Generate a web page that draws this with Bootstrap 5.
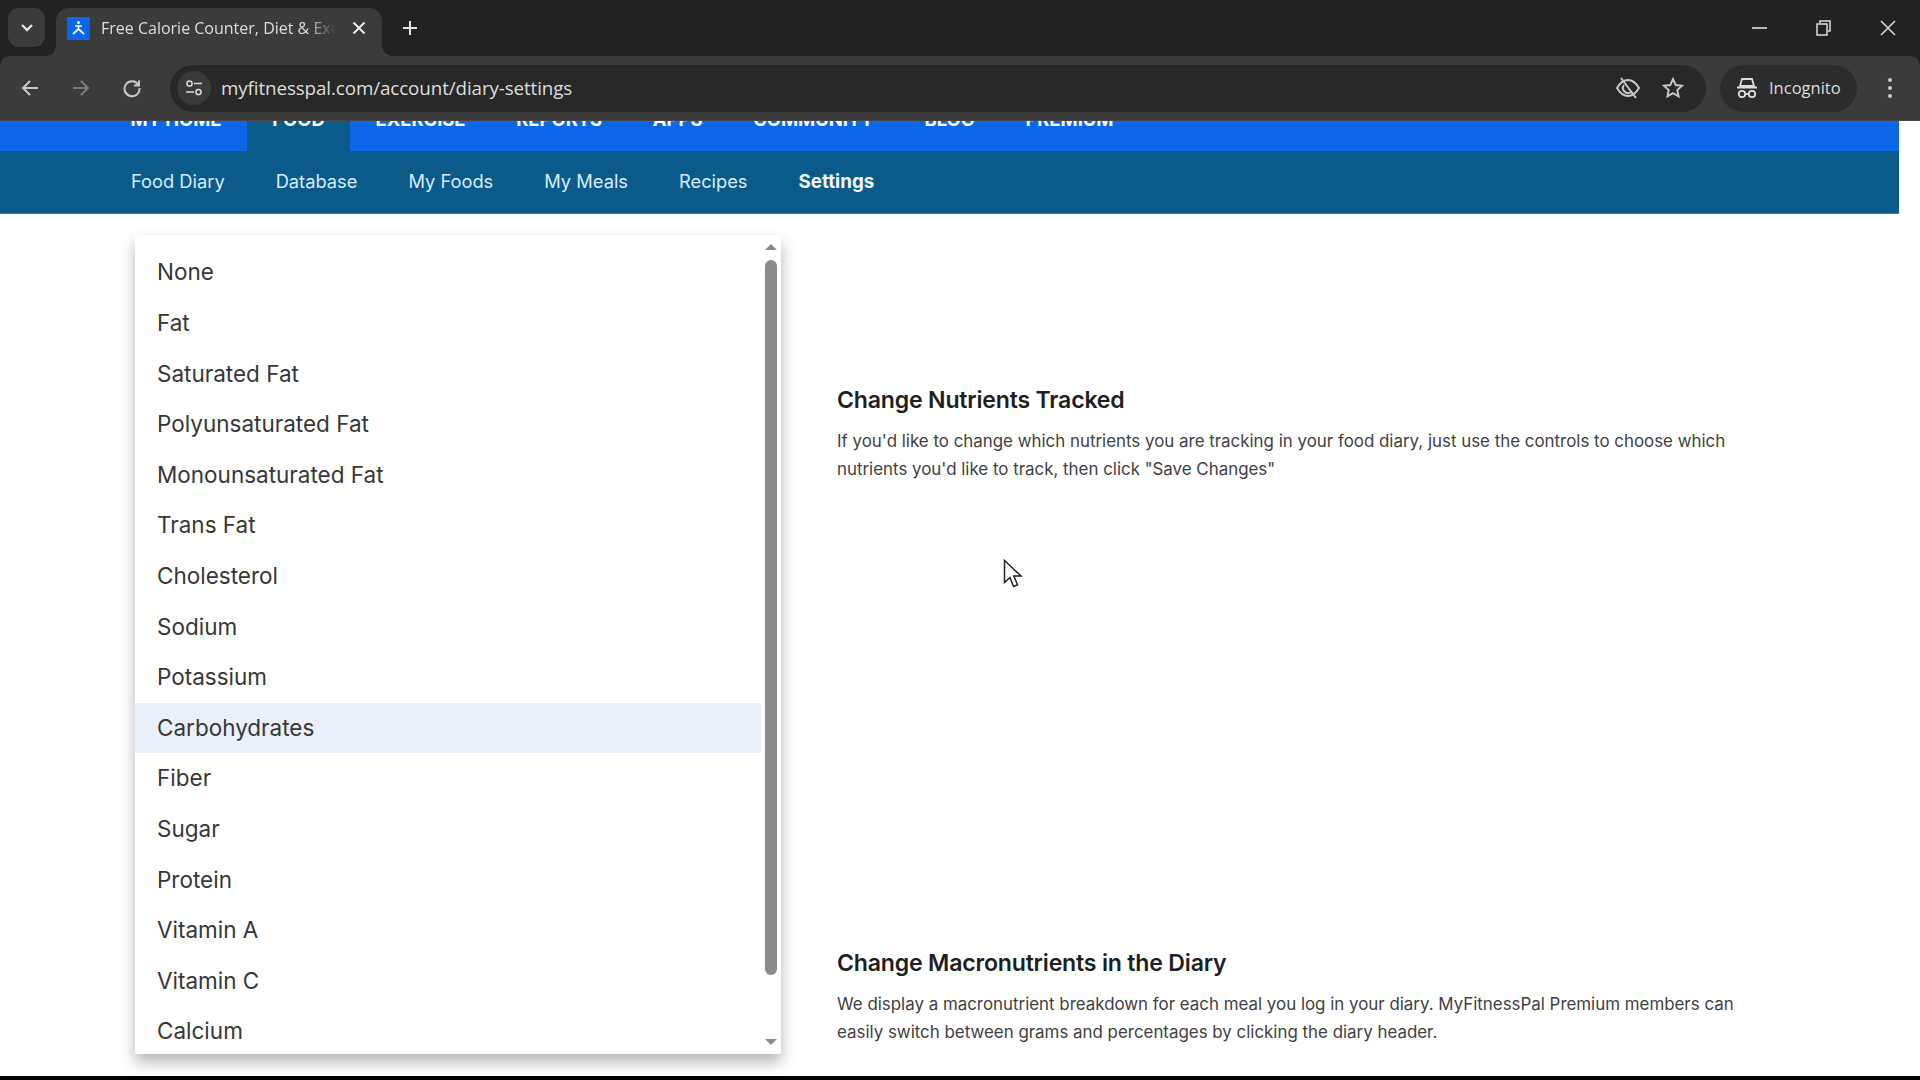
<!DOCTYPE html>
<html lang="en">
<head>
<meta charset="utf-8">
<title>Diary Settings</title>
<link href="https://cdn.jsdelivr.net/npm/bootstrap@5.3.0/dist/css/bootstrap.min.css" rel="stylesheet">
<style>
html,body{height:1080px;overflow:hidden;background:#fff}
.shell{height:1080px;font-family:Inter,"Noto Sans",sans-serif}
.chromebar{background:#222}
.tabstrip{height:56px;background:#222;color:#e3e3e3;font-family:"Open Sans","Noto Sans",sans-serif}
.tablist-btn{width:37px;height:39px;margin:8px 0 0 8px;background:#3b3b3b;border-radius:11px}
.tab-on{position:relative;width:326px;height:48px;margin:8px 0 0 11px;background:#3b3b3b;border-radius:13px 13px 0 0;padding:0 12px 8px 11px}
.tab-on::before,.tab-on::after{content:"";position:absolute;bottom:0;width:10px;height:10px}
.tab-on::before{left:-10px;background:radial-gradient(circle at 0 0,#222 9.5px,#3b3b3b 10px)}
.tab-on::after{right:-10px;background:radial-gradient(circle at 100% 0,#222 9.5px,#3b3b3b 10px)}
.fav{width:23px;height:23px;background:#0c66e8;flex:none}
.tab-title{width:234px;margin-left:11px;font-size:16px;white-space:nowrap;overflow:hidden;color:#ddd;-webkit-mask-image:linear-gradient(90deg,#000 88%,transparent);mask-image:linear-gradient(90deg,#000 88%,transparent)}
.tab-x{margin-left:17px}
.tab-plus{margin:20px 0 0 20px}
.winbtns{height:56px;margin-left:auto;padding-right:24px;gap:49px}
.toolbar{height:65px;background:#3b3b3b;position:relative;z-index:3;border-bottom:1px solid #4a4445;border-radius:10px 10px 0 0}
.navico{width:51px}
.omnibox{margin-left:13px;width:1536px;height:47px;background:#282828;border-radius:24px;color:#e3e3e3;padding:0 22px 0 7px}
.sitechip{width:34px;height:34px;border-radius:50%;background:#3a3a3a}
.url{margin-left:10px;font-size:18.8px;font-family:"Open Sans","Noto Sans",sans-serif;color:#dedede;letter-spacing:-.1px}
.omni-end{margin-left:auto;gap:21px}
.incog{margin-left:14px;width:137px;height:47px;background:#2c2c2c;border-radius:24px;padding-left:16px;color:#ddd;font-family:"Open Sans","Noto Sans",sans-serif;font-size:16.5px;gap:11px}
.kebab{margin-left:30px}
.pagehost{width:1899px}
.topnav{height:30px;background:#0c66e8;padding-left:105px}
.topnav a{display:block;height:32px;padding:0 25.4px;margin-top:-2px;line-height:0;color:#fff;font-weight:700;font-size:18.4px;text-decoration:none}
.topnav a.here{background:#0a5a8a}
.subnav{height:63px;background:#0a5a8a;padding-left:131px;gap:51px;border-bottom:1px solid #3b7aa3}
.subnav a{color:#d6ecfb;text-decoration:none;font-size:18.3px;font-weight:400}
.subnav a.here{color:#f2faff;font-weight:700;font-size:18.8px}
.pagemain{flex:1 1 auto;position:relative;background:#fff;min-height:0}
.copyblock{margin-left:837px;width:920px;padding-top:171px}
.copyblock h2{font-size:23.1px;font-weight:600;color:#1f1f1f;margin:0 0 12px;line-height:30px;letter-spacing:-.2px}
.copyblock p{font-size:16.9px;line-height:28px;color:#3f3f3f;margin:0}
.second{margin-top:465px}
.nutrient-menu{position:absolute;left:135px;top:21px;width:646px;height:819px;background:#fff;border-radius:2px;box-shadow:0 8px 15px rgba(0,0,0,.3);overflow:hidden;padding:0;border:0;display:flex;margin:0}
.nutrient-list{flex:1 1 auto;padding:12.4px 0 0;list-style:none;margin:0}
.nutrient-list li{height:50.6px;line-height:50.6px;padding-left:22px;font-size:22.5px;color:#373737;white-space:nowrap}
.nutrient-list li.hot{background:#e9effb}
.menu-scroll{width:20px;flex:none;padding:9px 0 9px 0}
.thumb{width:12px;flex:1 1 auto;background:#8b8b8b;border-radius:6px;margin:10px 0 64px}
.pointer{position:absolute;left:1003px;top:345px}
.blackline{height:4px;background:#000;flex:none;width:100%}
</style>
</head>
<body>
<div class="shell d-flex flex-column">
 <div class="chromebar">
  <div class="tabstrip d-flex align-items-start">
    <div class="tablist-btn d-flex align-items-center justify-content-center">
      <svg width="14" height="10" viewBox="0 0 14 10"><path d="M2 2l5 5 5-5" fill="none" stroke="#e3e3e3" stroke-width="2.4"/></svg>
    </div>
    <div class="tab-on d-flex align-items-center">
      <span class="fav d-flex align-items-center justify-content-center">
        <svg width="17" height="17" viewBox="0 0 17 17"><path d="M8.500 5v4M3 14l5.500-5 5.500 5M5 6h7" fill="none" stroke="#fff" stroke-width="1.700"/><circle cx="8.500" cy="2.500" r="1.500" fill="#fff"/></svg>
      </span>
      <span class="tab-title">Free Calorie Counter, Diet &amp; Exercise</span>
      <svg class="tab-x" width="14" height="14" viewBox="0 0 14 14"><path d="M1.500 1.500l11 11M12.500 1.500l-11 11" stroke="#e8e8e8" stroke-width="2"/></svg>
    </div>
    <svg class="tab-plus" width="16" height="16" viewBox="0 0 16 16"><path d="M8 1v14M1 8h14" stroke="#e3e3e3" stroke-width="2"/></svg>
    <div class="winbtns d-flex align-items-center">
      <svg width="15" height="4" viewBox="0 0 15 4"><path d="M0 2h15" stroke="#ddd" stroke-width="1.600"/></svg>
      <svg width="15" height="16" viewBox="0 0 15 16"><path d="M4 3V1h10v10h-2M1 4h10v11H1z" fill="none" stroke="#ddd" stroke-width="1.500"/></svg>
      <svg width="16" height="16" viewBox="0 0 16 16"><path d="M1 1l14 14M15 1L1 15" stroke="#ddd" stroke-width="1.500"/></svg>
    </div>
  </div>

  <div class="toolbar d-flex align-items-center">
    <div class="navico d-flex justify-content-center ms-1">
      <svg width="20" height="20" viewBox="0 0 20 20"><path d="M18 10H3M10 3l-7 7 7 7" fill="none" stroke="#c9c9c9" stroke-width="2"/></svg>
    </div>
    <div class="navico d-flex justify-content-center">
      <svg width="20" height="20" viewBox="0 0 20 20"><path d="M2 10h15M10 3l7 7-7 7" fill="none" stroke="#7d7d7d" stroke-width="2"/></svg>
    </div>
    <div class="navico d-flex justify-content-center">
      <svg width="20" height="20" viewBox="0 0 20 20"><path d="M16.500 7A7.500 7.500 0 1 0 17.500 10M17 2.500V7.500H12" fill="none" stroke="#c9c9c9" stroke-width="2"/></svg>
    </div>
    <div class="omnibox d-flex align-items-center">
      <span class="sitechip d-flex align-items-center justify-content-center">
        <svg width="18" height="18" viewBox="0 0 18 18"><circle cx="4.500" cy="4.500" r="2.600" fill="none" stroke="#ddd" stroke-width="1.500"/><path d="M9 4.500h8M1 13h8" stroke="#ddd" stroke-width="1.500"/><circle cx="13.500" cy="13" r="2.600" fill="none" stroke="#ddd" stroke-width="1.500"/></svg>
      </span>
      <span class="url">myfitnesspal.com/account/diary-settings</span>
      <div class="omni-end d-flex align-items-center">
        <svg width="26" height="24" viewBox="0 0 26 24"><path d="M2 12c3-5 7-8 11-8s8 3 11 8c-3 5-7 8-11 8s-8-3-11-8z" fill="none" stroke="#c9c9c9" stroke-width="2"/><path d="M6 2l15 20M9 9a5 5 0 0 0 7 7" fill="none" stroke="#c9c9c9" stroke-width="2"/></svg>
        <svg width="22" height="22" viewBox="0 0 22 22"><path d="M11 2l2.700 6 6.300.7-4.700 4.300 1.300 6.400-5.600-3.200-5.600 3.200 1.300-6.400L2 8.700 8.300 8z" fill="none" stroke="#c9c9c9" stroke-width="1.900"/></svg>
      </div>
    </div>
    <div class="incog d-flex align-items-center">
      <svg width="22" height="22" viewBox="0 0 22 22"><path d="M6 2h10l2 7H4zM1 10.500h20" fill="none" stroke="#ddd" stroke-width="1.800"/><circle cx="6" cy="17" r="3.200" fill="none" stroke="#ddd" stroke-width="1.800"/><circle cx="16" cy="17" r="3.200" fill="none" stroke="#ddd" stroke-width="1.800"/><path d="M9 17h4" stroke="#ddd" stroke-width="1.800"/></svg>
      <span>Incognito</span>
    </div>
    <svg class="kebab" width="6" height="22" viewBox="0 0 6 22"><circle cx="3" cy="3" r="2.100" fill="#c9c9c9"/><circle cx="3" cy="11" r="2.100" fill="#c9c9c9"/><circle cx="3" cy="19" r="2.100" fill="#c9c9c9"/></svg>
  </div>
 </div>

  <div class="pagehost">
    <nav class="topnav d-flex">
      <a href="#">MY HOME</a>
      <a href="#" class="here">FOOD</a>
      <a href="#">EXERCISE</a>
      <a href="#">REPORTS</a>
      <a href="#">APPS</a>
      <a href="#">COMMUNITY</a>
      <a href="#">BLOG</a>
      <a href="#">PREMIUM</a>
    </nav>
    <nav class="subnav d-flex align-items-center">
      <a href="#">Food Diary</a>
      <a href="#">Database</a>
      <a href="#">My Foods</a>
      <a href="#">My Meals</a>
      <a href="#">Recipes</a>
      <a href="#" class="here">Settings</a>
    </nav>
  </div>

  <main class="pagemain">
    <div class="copyblock">
      <section>
        <h2>Change Nutrients Tracked</h2>
        <p>If you'd like to change which nutrients you are tracking in your food diary, just use the controls to choose which nutrients you'd like to track, then click "Save Changes"</p>
      </section>
      <section class="second">
        <h2>Change Macronutrients in the Diary</h2>
        <p>We display a macronutrient breakdown for each meal you log in your diary. MyFitnessPal Premium members can easily switch between grams and percentages by clicking the diary header.</p>
      </section>
    </div>

    <div class="nutrient-menu">
      <ul class="nutrient-list">
        <li>None</li><li>Fat</li><li>Saturated Fat</li><li>Polyunsaturated Fat</li><li>Monounsaturated Fat</li><li>Trans Fat</li><li>Cholesterol</li><li>Sodium</li><li>Potassium</li><li class="hot">Carbohydrates</li><li>Fiber</li><li>Sugar</li><li>Protein</li><li>Vitamin A</li><li>Vitamin C</li><li>Calcium</li>
      </ul>
      <div class="menu-scroll d-flex flex-column align-items-start">
        <svg class="ms-1" width="12" height="6" viewBox="0 0 12 6"><path d="M6 0l6 6H0z" fill="#8b8b8b"/></svg>
        <div class="thumb ms-1"></div>
        <svg class="ms-1" width="12" height="6" viewBox="0 0 12 6"><path d="M0 0h12L6 6z" fill="#8b8b8b"/></svg>
      </div>
    </div>

    <svg class="pointer" width="20" height="30" viewBox="0 0 20 30"><path d="M1.500 1.500v22l5.500-5 3.500 9 4-1.700-3.700-8.800h7.200z" fill="#fff" stroke="#222" stroke-width="1.500"/></svg>
  </main>
  <div class="blackline"></div>
</div>
<script src="https://cdn.jsdelivr.net/npm/bootstrap@5.3.0/dist/js/bootstrap.bundle.min.js"></script>
</body>
</html>
